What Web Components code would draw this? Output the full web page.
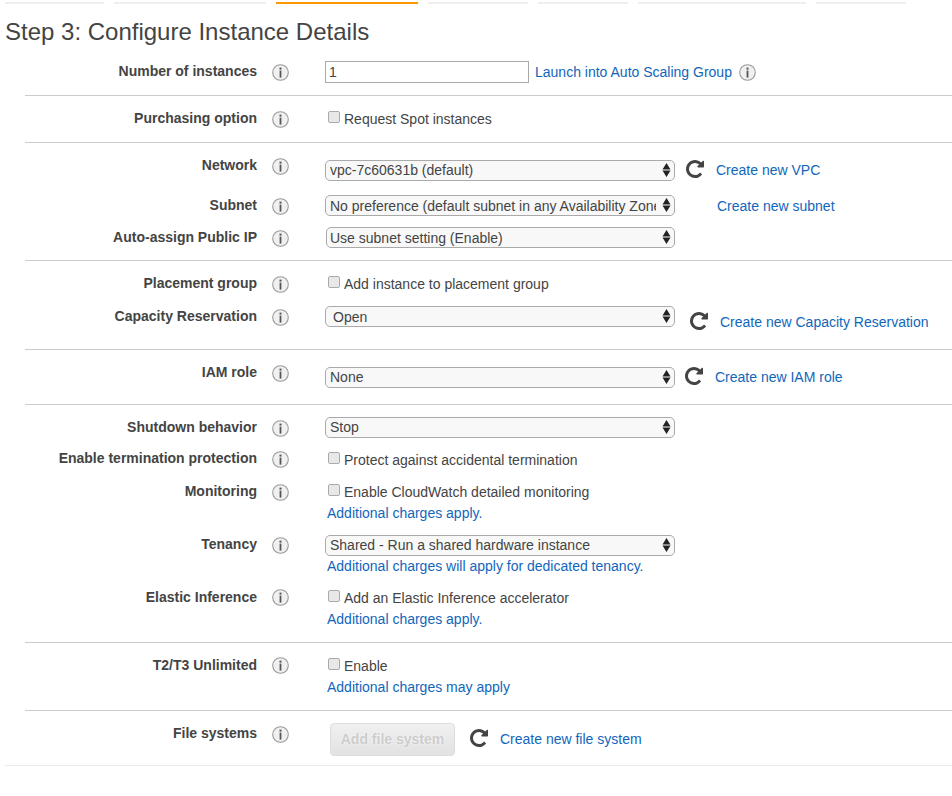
<!DOCTYPE html>
<html>
<head>
<meta charset="utf-8">
<title>Step 3: Configure Instance Details</title>
<style>
  html, body { margin: 0; padding: 0; background: #fff; }
  body { font-family: "Liberation Sans", Arial, sans-serif; font-size: 14px; color: #444; height: 796px; overflow: hidden; }
</style>
</head>
<body>
<wizard-tabs></wizard-tabs>
<page-title>Step 3: Configure Instance Details</page-title>

<cfg-section style="height:45px;padding-top:11px">
  <cfg-row label="Number of instances">
    <cfg-input value="1"></cfg-input>
    <cfg-link style="margin:1px 0 0 6px">Launch into Auto Scaling Group</cfg-link>
    <info-icon style="margin:3px 0 0 7px"></info-icon>
  </cfg-row>
</cfg-section>

<cfg-section style="height:46px">
  <cfg-row label="Purchasing option">
    <cfg-check>Request Spot instances</cfg-check>
  </cfg-row>
</cfg-section>

<cfg-section style="height:117px">
  <cfg-row label="Network" style="height:40px">
    <cfg-select style="margin-top:5px">vpc-7c60631b (default)</cfg-select>
    <refresh-icon style="margin:5px 0 0 11px"></refresh-icon>
    <cfg-link style="margin:5px 0 0 12px">Create new VPC</cfg-link>
  </cfg-row>
  <cfg-row label="Subnet" style="height:32px">
    <cfg-select class="low">No preference (default subnet in any Availability Zone)</cfg-select>
    <cfg-link style="margin:1px 0 0 42px">Create new subnet</cfg-link>
  </cfg-row>
  <cfg-row label="Auto-assign Public IP">
    <cfg-select class="low inset">Use subnet setting (Enable)</cfg-select>
  </cfg-row>
</cfg-section>

<cfg-section style="height:88px">
  <cfg-row label="Placement group" style="height:33px">
    <cfg-check>Add instance to placement group</cfg-check>
  </cfg-row>
  <cfg-row label="Capacity Reservation">
    <cfg-select class="low wide">Open</cfg-select>
    <refresh-icon style="margin:6px 0 0 15px"></refresh-icon>
    <cfg-link style="margin:6px 0 0 12px">Create new Capacity Reservation</cfg-link>
  </cfg-row>
</cfg-section>

<cfg-section style="height:54px">
  <cfg-row label="IAM role">
    <cfg-select style="margin-top:5px">None</cfg-select>
    <refresh-icon style="margin:5px 0 0 10px"></refresh-icon>
    <cfg-link style="margin:5px 0 0 12px">Create new IAM role</cfg-link>
  </cfg-row>
</cfg-section>

<cfg-section style="height:237px">
  <cfg-row label="Shutdown behavior" style="height:31px">
    <cfg-select>Stop</cfg-select>
  </cfg-row>
  <cfg-row label="Enable termination protection" style="height:33px">
    <cfg-check style="margin-top:1px">Protect against accidental termination</cfg-check>
  </cfg-row>
  <cfg-row label="Monitoring" style="height:53px">
    <cfg-check note="Additional charges apply.">Enable CloudWatch detailed monitoring</cfg-check>
  </cfg-row>
  <cfg-row label="Tenancy" style="height:53px">
    <cfg-select note="Additional charges will apply for dedicated tenancy." style="margin-top:1px">Shared - Run a shared hardware instance</cfg-select>
  </cfg-row>
  <cfg-row label="Elastic Inference" style="--tip-top:2px">
    <cfg-check note="Additional charges apply.">Add an Elastic Inference accelerator</cfg-check>
  </cfg-row>
</cfg-section>

<cfg-section style="height:67px">
  <cfg-row label="T2/T3 Unlimited" style="--tip-top:2px">
    <cfg-check note="Additional charges may apply">Enable</cfg-check>
  </cfg-row>
</cfg-section>

<cfg-section style="height:54px" class="last">
  <cfg-row label="File systems">
    <cfg-button>Add file system</cfg-button>
    <refresh-icon style="margin:6px 0 0 15px"></refresh-icon>
    <cfg-link style="margin:6px 0 0 12px">Create new file system</cfg-link>
  </cfg-row>
</cfg-section>

<script>
class WizardTabs extends HTMLElement {
  constructor() {
    super()
    this.attachShadow({ mode: 'open' })
  }
  connectedCallback() {
    const widths = [99, 152, 142, 100, 90, 168, 90]
    this.shadowRoot.innerHTML = `
      <style>
        :host { display: flex; gap: 10px; padding: 2px 0 0 5px; height: 2px; }
        div { height: 2px; background: #eee; flex: none; }
        .on { background: #f90; }
      </style>
      ${widths.map((w, i) => `<div class="${i == 2 ? 'on' : ''}" style="width:${w}px"></div>`).join('')}
    `
  }
}

class PageTitle extends HTMLElement {
  constructor() {
    super()
    this.attachShadow({ mode: 'open' })
    this.shadowRoot.innerHTML = `
      <style>
        :host { display: block; height: 46px; padding: 13px 0 0 5px; box-sizing: border-box; font-size: 24px; line-height: 30px; color: #444; }
      </style>
      <slot></slot>
    `
  }
}

class CfgSection extends HTMLElement {
  constructor() {
    super()
    this.attachShadow({ mode: 'open' })
    this.shadowRoot.innerHTML = `
      <style>
        :host { display: block; box-sizing: border-box; margin-left: 25px; padding-top: 12px; box-shadow: 0 1px 0 #ccc; margin-bottom: 1px; }
        :host(.last) { margin-left: 5px; box-shadow: 0 1px 0 #eaeaea; }
        :host(.last) ::slotted(cfg-row) { margin-left: -5px; }
      </style>
      <slot></slot>
    `
  }
}

class CfgRow extends HTMLElement {
  constructor() {
    super()
    this.attachShadow({ mode: 'open' })
    this.shadowRoot.innerHTML = `
      <style>
        :host { display: flex; align-items: flex-start; margin-left: -25px; }
        .label { width: 257px; flex: none; text-align: right; font-weight: bold; line-height: 20px; color: #444; white-space: nowrap; }
        .tip { width: 68px; flex: none; padding: var(--tip-top, 3px) 0 0 15px; box-sizing: border-box; display: flex; }
        .ctl { display: flex; align-items: flex-start; flex: 1; min-width: 0; }
      </style>
      <div class="label"></div>
      <div class="tip"><info-icon></info-icon></div>
      <div class="ctl"><slot></slot></div>
    `
  }
  connectedCallback() {
    this.shadowRoot.querySelector('.label').textContent = this.getAttribute('label')
  }
}

class InfoIcon extends HTMLElement {
  constructor() {
    super()
    this.attachShadow({ mode: 'open' })
    this.shadowRoot.innerHTML = `
      <style>:host { display: block; width: 17px; height: 17px; flex: none; } svg { display: block; }</style>
      <svg width="17" height="17" viewBox="0 0 17 17">
        <circle cx="8.5" cy="8.5" r="7.8" fill="#f0f0f0" stroke="#999" stroke-width="1.1"/>
        <rect x="7.5" y="3.6" width="2" height="2" fill="#555"/>
        <rect x="7.6" y="6.6" width="1.8" height="7" fill="#555"/>
      </svg>
    `
  }
}

class RefreshIcon extends HTMLElement {
  constructor() {
    super()
    this.attachShadow({ mode: 'open' })
    this.shadowRoot.innerHTML = `
      <style>:host { display: block; width: 18px; height: 18px; flex: none; } svg { display: block; }</style>
      <svg width="18" height="18" viewBox="128 128 1536 1536">
        <path fill="#444" d="M1664 256v448q0 26-19 45t-45 19h-448q-42 0-59-40-17-39 14-69l138-138q-148-137-349-137-104 0-198.500 40.500t-163.500 109.500-109.500 163.500-40.500 198.500 40.500 198.500 109.500 163.500 163.500 109.500 198.500 40.500q119 0 225-52t179-147q7-10 23-12 15 0 25 9l137 138q9 8 9.500 20.500t-7.500 22.500q-109 132-264 204.500t-327 72.500q-156 0-298-61t-245-164-164-245-61-298 61-298 164-245 245-164 298-61q147 0 284.500 55.500t244.500 156.500l130-129q29-31 70-14 39 17 39 59z"/>
      </svg>
    `
  }
}

class CfgLink extends HTMLElement {
  constructor() {
    super()
    this.attachShadow({ mode: 'open' })
    this.shadowRoot.innerHTML = `
      <style>:host { display: block; flex: none; color: #16b; line-height: 20px; white-space: nowrap; cursor: pointer; }</style>
      <slot></slot>
    `
  }
}

class CfgInput extends HTMLElement {
  constructor() {
    super()
    this.attachShadow({ mode: 'open' })
    this.shadowRoot.innerHTML = `
      <style>
        :host { display: block; flex: none; }
        input { display: block; width: 204px; height: 22px; box-sizing: border-box; margin: 0; padding: 0 3px; border: 1px solid #aaa; border-radius: 0; font: 14px "Liberation Sans", Arial, sans-serif; color: #444; outline: none; }
      </style>
      <input type="text">
    `
  }
  connectedCallback() {
    this.shadowRoot.querySelector('input').value = this.getAttribute('value')
  }
}

class CfgSelect extends HTMLElement {
  constructor() {
    super()
    this.attachShadow({ mode: 'open' })
    this.shadowRoot.innerHTML = `
      <style>
        :host { display: block; flex: none; width: 350px; }
        .box { position: relative; height: 21px; box-sizing: border-box; border: 1px solid #aaa; border-radius: 5px; background: #f8f8f8; padding: 0 18px 0 4px; line-height: 19px; color: #444; }
        :host(.low) .box { padding-top: 1px; }
        :host(.wide) .box { padding-left: 7px; }
        :host(.inset) .box { margin-left: 1px; padding-left: 3px; }
        .val { display: block; white-space: nowrap; overflow: hidden; }
        svg { position: absolute; right: 3px; top: 2px; }
        .note { color: #16b; line-height: 20px; white-space: nowrap; margin-left: 2px; }
        .note:empty { display: none; }
      </style>
      <div class="box">
        <span class="val"><slot></slot></span>
        <svg width="9" height="14" viewBox="0 0 9 14"><path d="M4.500 0 L8.500 6.500 H0.500 Z M4.500 14 L8.500 7.500 H0.500 Z" fill="#222"/></svg>
      </div>
      <div class="note"></div>
    `
  }
  connectedCallback() {
    this.shadowRoot.querySelector('.note').textContent = this.getAttribute('note') || ''
  }
}

class CfgCheck extends HTMLElement {
  constructor() {
    super()
    this.attachShadow({ mode: 'open' })
    this.shadowRoot.innerHTML = `
      <style>
        :host { display: block; flex: none; padding-left: 3px; }
        .line { display: flex; align-items: flex-start; gap: 4px; line-height: 20px; white-space: nowrap; height: 21px; padding-top: 1px; }
        .box { width: 12px; height: 12px; box-sizing: border-box; margin-top: 2px; border: 1px solid #aaa; border-radius: 2px; background: #e8e8e8; flex: none; }
        .note { color: #16b; line-height: 20px; white-space: nowrap; margin-left: -1px; }
        .note:empty { display: none; }
      </style>
      <div class="line"><span class="box"></span><span><slot></slot></span></div>
      <div class="note"></div>
    `
  }
  connectedCallback() {
    this.shadowRoot.querySelector('.note').textContent = this.getAttribute('note') || ''
  }
}

class CfgButton extends HTMLElement {
  constructor() {
    super()
    this.attachShadow({ mode: 'open' })
    this.shadowRoot.innerHTML = `
      <style>
        :host { display: block; flex: none; margin-left: 5px; }
        button { display: block; width: 125px; height: 33px; padding: 0 0 2px; border: 1px solid #ddd; border-radius: 4px; background: linear-gradient(#f0f0f0, #e2e2e2); color: #ccc; text-shadow: 0 0 2px #fff; font: bold 14px "Liberation Sans", Arial, sans-serif; }
      </style>
      <button disabled><slot></slot></button>
    `
  }
}

customElements.define('wizard-tabs', WizardTabs)
customElements.define('page-title', PageTitle)
customElements.define('cfg-section', CfgSection)
customElements.define('cfg-row', CfgRow)
customElements.define('info-icon', InfoIcon)
customElements.define('refresh-icon', RefreshIcon)
customElements.define('cfg-link', CfgLink)
customElements.define('cfg-input', CfgInput)
customElements.define('cfg-select', CfgSelect)
customElements.define('cfg-check', CfgCheck)
customElements.define('cfg-button', CfgButton)
</script>
</body>
</html>
